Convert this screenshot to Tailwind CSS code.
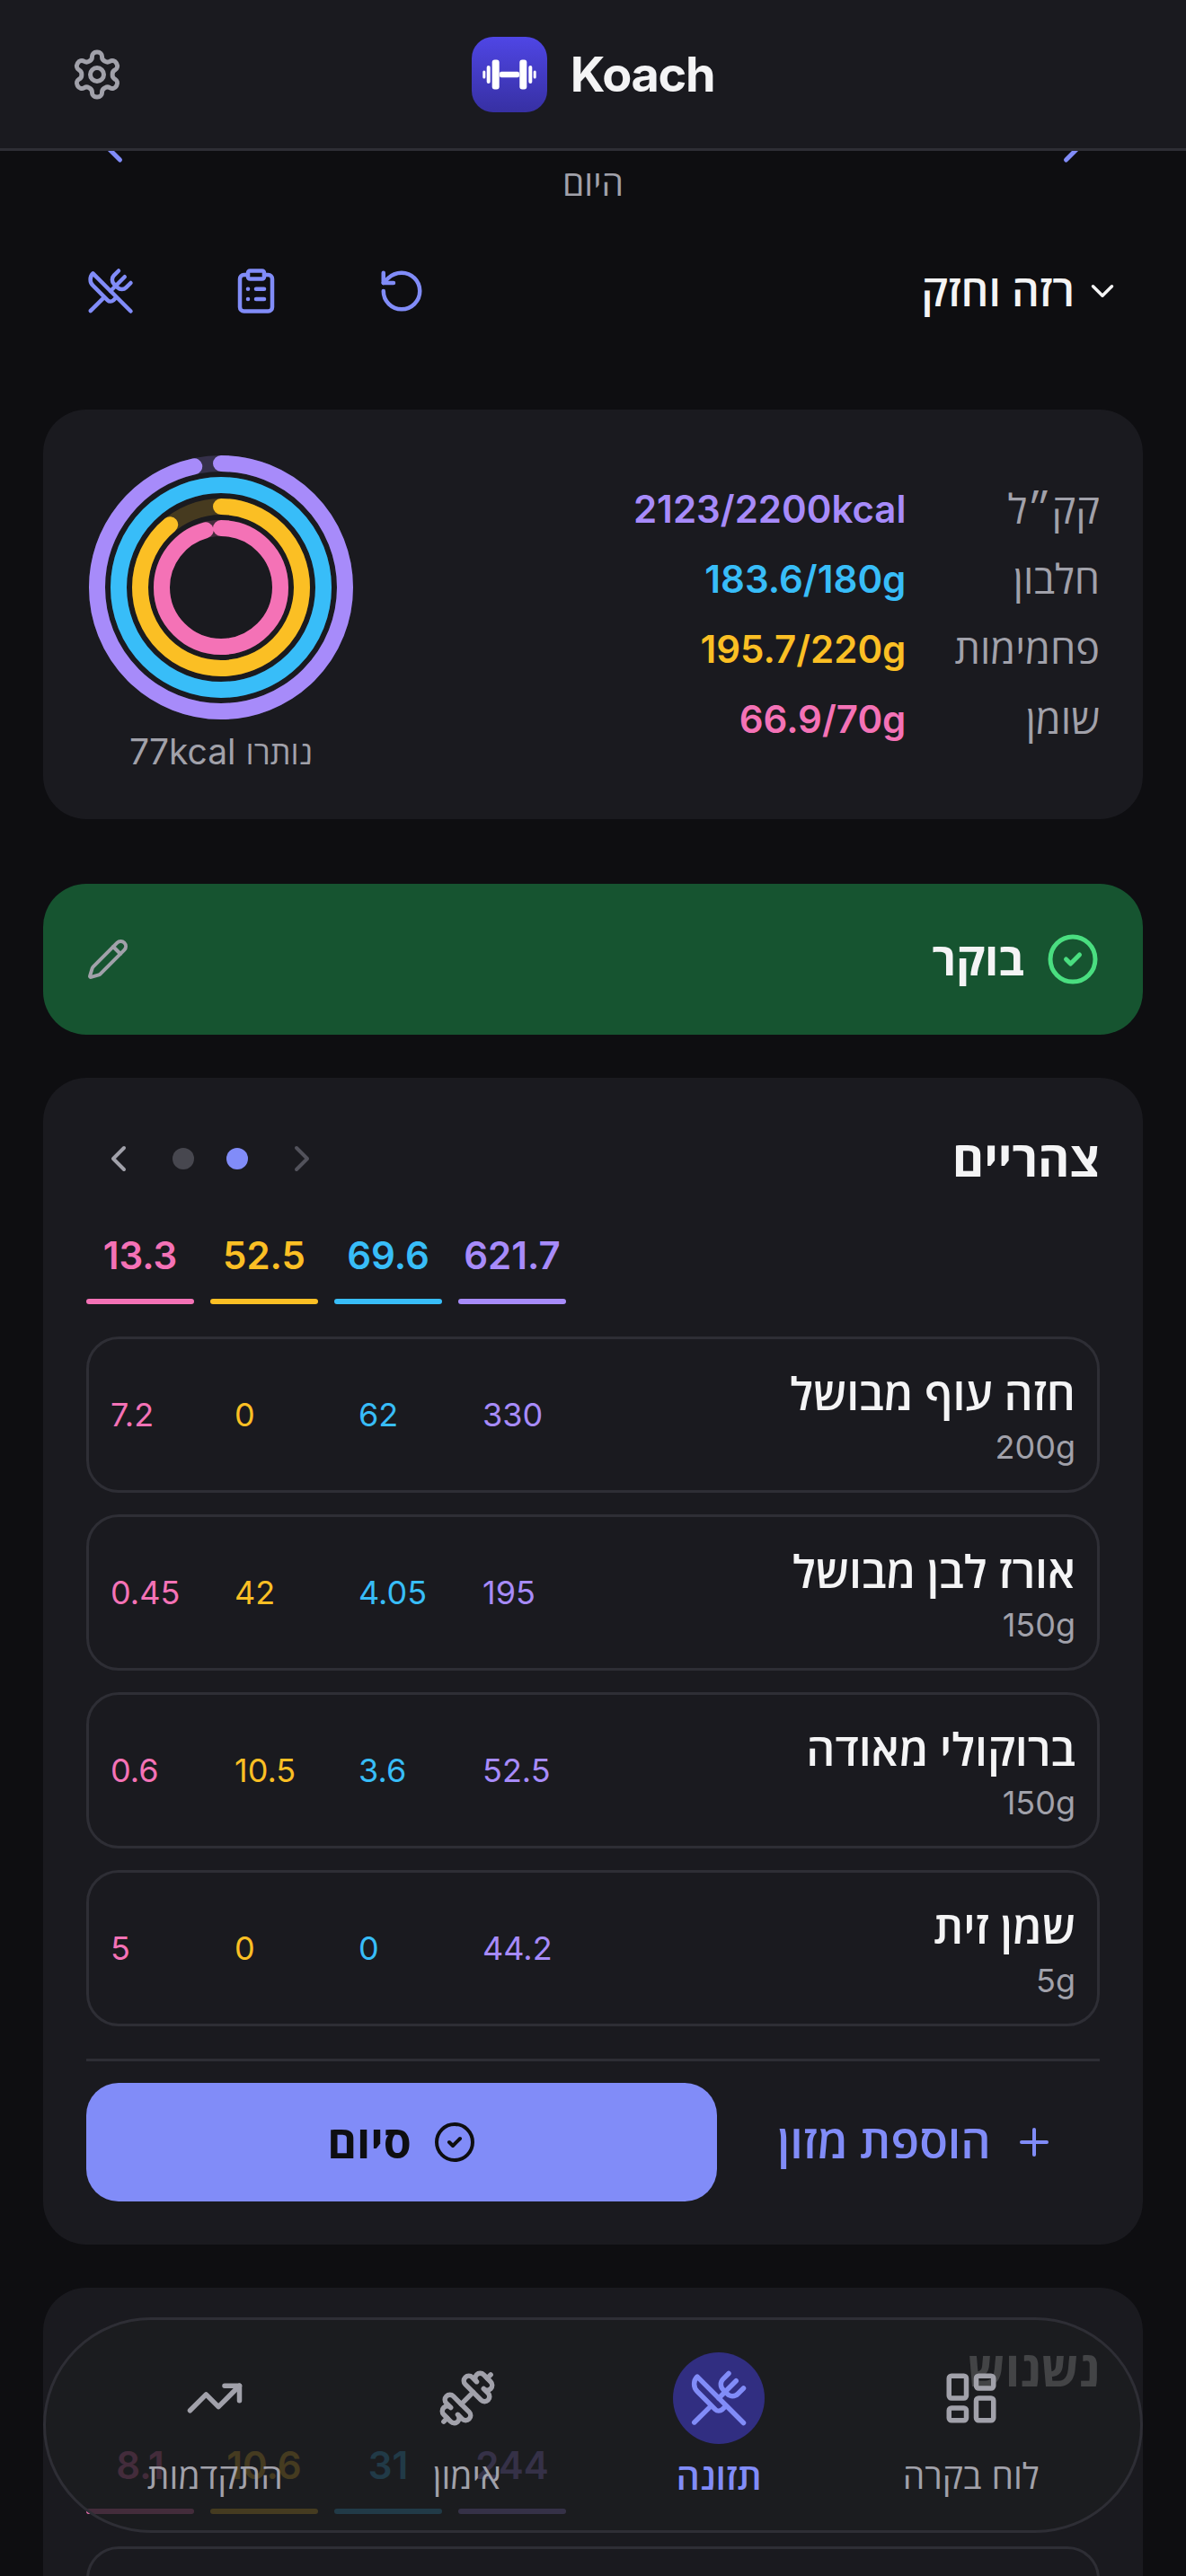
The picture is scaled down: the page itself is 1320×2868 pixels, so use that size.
<!DOCTYPE html>
<html lang="he" dir="rtl">
<head>
<meta charset="UTF-8">
<meta name="viewport" content="width=device-width, initial-scale=1.0">
<title>Koach</title>
<script src="https://cdn.jsdelivr.net/npm/@tailwindcss/browser@4"></script>
</head>
<body class="bg-[#0e0e11] text-[#f4f4f5] font-[Inter,'Open_Sans',sans-serif]">
<div class="relative h-[2868px] w-[1320px] overflow-hidden">

  <!-- Top bar -->
  <header class="absolute top-0 inset-x-0 z-10 h-[168px] bg-[#1a1a1f] border-b-[3px] border-[#2e2e35] grid grid-cols-3 items-center px-[78px]" dir="ltr">
    <svg class="text-[#a1a1aa]" width="60" height="60" viewBox="0 0 24 24" fill="none" stroke="currentColor" stroke-width="2" stroke-linecap="round" stroke-linejoin="round"><path d="M12.22 2h-.44a2 2 0 0 0-2 2v.18a2 2 0 0 1-1 1.73l-.43.25a2 2 0 0 1-2 0l-.15-.08a2 2 0 0 0-2.73.73l-.22.38a2 2 0 0 0 .73 2.73l.15.1a2 2 0 0 1 1 1.72v.51a2 2 0 0 1-1 1.74l-.15.09a2 2 0 0 0-.73 2.73l.22.38a2 2 0 0 0 2.73.73l.15-.08a2 2 0 0 1 2 0l.43.25a2 2 0 0 1 1 1.73V20a2 2 0 0 0 2 2h.44a2 2 0 0 0 2-2v-.18a2 2 0 0 1 1-1.73l.43-.25a2 2 0 0 1 2 0l.15.08a2 2 0 0 0 2.73-.73l.22-.39a2 2 0 0 0-.73-2.73l-.15-.08a2 2 0 0 1-1-1.74v-.5a2 2 0 0 1 1-1.74l.15-.09a2 2 0 0 0 .73-2.73l-.22-.38a2 2 0 0 0-2.73-.73l-.15.08a2 2 0 0 1-2 0l-.43-.25a2 2 0 0 1-1-1.73V4a2 2 0 0 0-2-2z"/><circle cx="12" cy="12" r="3"/></svg>
    <div class="flex items-center justify-center gap-[26px] whitespace-nowrap">
      <div class="w-[84px] h-[84px] rounded-[24px] bg-gradient-to-b from-[#4f46e5] to-[#3730a3] flex items-center justify-center shrink-0">
        <svg width="84" height="84" viewBox="0 0 84 84" fill="#ffffff">
          <rect x="12.3" y="37.5" width="3" height="9" rx="1.5"/>
          <rect x="16.7" y="32" width="4" height="20" rx="2"/>
          <rect x="22.7" y="25.5" width="8" height="33" rx="3"/>
          <rect x="31" y="38.7" width="22" height="6.6" rx="2"/>
          <rect x="53.3" y="25.5" width="8" height="33" rx="3"/>
          <rect x="63.3" y="32" width="4" height="20" rx="2"/>
          <rect x="68.7" y="37.5" width="3" height="9" rx="1.5"/>
        </svg>
      </div>
      <span class="text-[54px] leading-[84px] font-bold tracking-tight">Koach</span>
    </div>
    <div></div>
  </header>

  <main class="pt-[133px] px-[48px]">
    <!-- Date row, mostly under the top bar -->
    <div class="flex justify-between items-start text-[#818cf8]">
      <svg width="60" height="60" viewBox="0 0 24 24" fill="none" stroke="currentColor" stroke-width="2" stroke-linecap="round" stroke-linejoin="round" class="mr-[48px]"><path d="m9 18 6-6-6-6"/></svg>
      <span class="mt-[44px] text-[39px] leading-[54px] text-[#a1a1aa]">היום</span>
      <svg width="60" height="60" viewBox="0 0 24 24" fill="none" stroke="currentColor" stroke-width="2" stroke-linecap="round" stroke-linejoin="round" class="ml-[48px]"><path d="m15 18-6-6 6-6"/></svg>
    </div>

    <!-- Plan picker and actions -->
    <div class="mt-[63px] flex justify-between items-center h-[60px] pr-[24px] pl-[48px]">
      <div class="flex items-center gap-[10px] text-[48px] font-semibold">
        <svg width="42" height="42" viewBox="0 0 24 24" fill="none" stroke="currentColor" stroke-width="2" stroke-linecap="round" stroke-linejoin="round"><path d="m6 9 6 6 6-6"/></svg>
        <span>רזה וחזק</span>
      </div>
      <div class="flex flex-row-reverse gap-[108px] text-[#818cf8]">
        <svg width="54" height="54" viewBox="0 0 24 24" fill="none" stroke="currentColor" stroke-width="2" stroke-linecap="round" stroke-linejoin="round"><path d="m16 2-2.3 2.3a3 3 0 0 0 0 4.2l1.8 1.8a3 3 0 0 0 4.2 0L22 8"/><path d="M15 15 3.3 3.3a4.2 4.2 0 0 0 0 6l7.3 7.3c.7.7 2 .7 2.8 0L15 15Zm0 0 7 7"/><path d="m2.1 21.8 6.4-6.3"/><path d="m19 5-7 7"/></svg>
        <svg width="54" height="54" viewBox="0 0 24 24" fill="none" stroke="currentColor" stroke-width="2" stroke-linecap="round" stroke-linejoin="round"><rect width="8" height="4" x="8" y="2" rx="1" ry="1"/><path d="M16 4h2a2 2 0 0 1 2 2v14a2 2 0 0 1-2 2H6a2 2 0 0 1-2-2V6a2 2 0 0 1 2-2h2"/><path d="M12 11h4"/><path d="M12 16h4"/><path d="M8 11h.01"/><path d="M8 16h.01"/></svg>
        <svg width="54" height="54" viewBox="0 0 24 24" fill="none" stroke="currentColor" stroke-width="2" stroke-linecap="round" stroke-linejoin="round"><path d="M3 12a9 9 0 1 0 9-9 9.75 9.75 0 0 0-6.74 2.74L3 8"/><path d="M3 3v5h5"/></svg>
      </div>
    </div>

    <!-- Daily totals -->
    <section class="mt-[102px] h-[456px] rounded-[48px] bg-[#1a1a1f] p-[48px] flex justify-between items-center">
      <div class="grid grid-cols-[auto_auto] gap-x-[54px] gap-y-[18px] text-[42px] leading-[60px]">
        <span class="text-[45px] text-[#a1a1aa]">קק״ל</span><span dir="ltr" class="text-right font-semibold text-[#a78bfa]">2123/2200kcal</span>
        <span class="text-[45px] text-[#a1a1aa]">חלבון</span><span dir="ltr" class="text-right font-semibold text-[#38bdf8]">183.6/180g</span>
        <span class="text-[45px] text-[#a1a1aa]">פחמימות</span><span dir="ltr" class="text-right font-semibold text-[#fbbf24]">195.7/220g</span>
        <span class="text-[45px] text-[#a1a1aa]">שומן</span><span dir="ltr" class="text-right font-semibold text-[#f472b6]">66.9/70g</span>
      </div>
      <div class="flex flex-col items-center w-[300px]">
        <svg width="300" height="300" viewBox="0 0 300 300" fill="none" stroke-width="18" stroke-linecap="round">
          <g transform="rotate(-90 150 150)">
            <circle cx="150" cy="150" r="138" stroke="#a78bfa" stroke-opacity="0.2" stroke-linecap="butt"/>
            <circle cx="150" cy="150" r="138" stroke="#a78bfa" stroke-dasharray="836.7 867.1"/>
            <circle cx="150" cy="150" r="114" stroke="#38bdf8" stroke-opacity="0.2" stroke-linecap="butt"/>
            <circle cx="150" cy="150" r="114" stroke="#38bdf8"/>
            <circle cx="150" cy="150" r="90" stroke="#fbbf24" stroke-opacity="0.2" stroke-linecap="butt"/>
            <circle cx="150" cy="150" r="90" stroke="#fbbf24" stroke-dasharray="503.2 565.5"/>
            <circle cx="150" cy="150" r="66" stroke="#f472b6" stroke-opacity="0.2" stroke-linecap="butt"/>
            <circle cx="150" cy="150" r="66" stroke="#f472b6" stroke-dasharray="396.4 414.7"/>
          </g>
        </svg>
        <span class="mt-[6px] text-[39px] leading-[54px] text-[#a1a1aa] whitespace-nowrap"><span class="text-[36px]">נותרו</span> 77kcal</span>
      </div>
    </section>

    <!-- Finished meal -->
    <section class="mt-[72px] h-[168px] rounded-[48px] bg-[#165430] px-[48px] flex justify-between items-center">
      <div class="flex items-center gap-[24px]">
        <svg class="text-[#4ade80]" width="60" height="60" viewBox="0 0 24 24" fill="none" stroke="currentColor" stroke-width="2" stroke-linecap="round" stroke-linejoin="round"><circle cx="12" cy="12" r="10"/><path d="m9 12 2 2 4-4"/></svg>
        <span class="text-[50px] font-bold">בוקר</span>
      </div>
      <svg class="text-[#a1a1aa]" width="48" height="48" viewBox="0 0 24 24" fill="none" stroke="currentColor" stroke-width="2" stroke-linecap="round" stroke-linejoin="round"><path d="M21.174 6.812a1 1 0 0 0-3.986-3.987L3.842 16.174a2 2 0 0 0-.5.83l-1.321 4.352a.5.5 0 0 0 .623.622l4.353-1.32a2 2 0 0 0 .83-.497z"/><path d="m15 5 4 4"/></svg>
    </section>

    <!-- Lunch -->
    <section class="mt-[48px] rounded-[48px] bg-[#1a1a1f] p-[48px]">
      <div class="flex justify-between items-center h-[84px]">
        <h2 class="text-[54px] font-bold">צהריים</h2>
        <div class="flex items-center gap-[36px] pl-[12px]" dir="ltr">
          <svg class="text-[#a1a1aa]" width="48" height="48" viewBox="0 0 24 24" fill="none" stroke="currentColor" stroke-width="2" stroke-linecap="round" stroke-linejoin="round"><path d="m15 18-6-6 6-6"/></svg>
          <span class="w-[24px] h-[24px] rounded-full bg-[#47474f]"></span>
          <span class="w-[24px] h-[24px] rounded-full bg-[#818cf8]"></span>
          <svg class="text-[#52525b]" width="48" height="48" viewBox="0 0 24 24" fill="none" stroke="currentColor" stroke-width="2" stroke-linecap="round" stroke-linejoin="round"><path d="m9 18 6-6-6-6"/></svg>
        </div>
      </div>

      <div class="mt-[36px] flex gap-[18px] text-[42px] leading-[60px] font-semibold text-center" dir="ltr">
        <div class="w-[120px] text-[#f472b6]">13.3<div class="mt-[18px] h-[6px] rounded-full bg-[#f472b6]"></div></div>
        <div class="w-[120px] text-[#fbbf24]">52.5<div class="mt-[18px] h-[6px] rounded-full bg-[#fbbf24]"></div></div>
        <div class="w-[120px] text-[#38bdf8]">69.6<div class="mt-[18px] h-[6px] rounded-full bg-[#38bdf8]"></div></div>
        <div class="w-[120px] text-[#a78bfa]">621.7<div class="mt-[18px] h-[6px] rounded-full bg-[#a78bfa]"></div></div>
      </div>

      <div class="mt-[36px] flex flex-col gap-[24px]">
        <div class="h-[174px] rounded-[36px] border-[3px] border-[#2e2e35] px-[24px] flex justify-between items-center">
          <div><div class="pt-[8px] text-[50px] leading-[64px] font-semibold">חזה עוף מבושל</div><div class="text-[36px] leading-[54px] text-[#a1a1aa]">200g</div></div>
          <div class="grid grid-cols-[repeat(4,138px)] text-[36px]" dir="ltr"><span class="text-[#f472b6]">7.2</span><span class="text-[#fbbf24]">0</span><span class="text-[#38bdf8]">62</span><span class="text-[#a78bfa]">330</span></div>
        </div>
        <div class="h-[174px] rounded-[36px] border-[3px] border-[#2e2e35] px-[24px] flex justify-between items-center">
          <div><div class="pt-[8px] text-[50px] leading-[64px] font-semibold">אורז לבן מבושל</div><div class="text-[36px] leading-[54px] text-[#a1a1aa]">150g</div></div>
          <div class="grid grid-cols-[repeat(4,138px)] text-[36px]" dir="ltr"><span class="text-[#f472b6]">0.45</span><span class="text-[#fbbf24]">42</span><span class="text-[#38bdf8]">4.05</span><span class="text-[#a78bfa]">195</span></div>
        </div>
        <div class="h-[174px] rounded-[36px] border-[3px] border-[#2e2e35] px-[24px] flex justify-between items-center">
          <div><div class="pt-[8px] text-[50px] leading-[64px] font-semibold">ברוקולי מאודה</div><div class="text-[36px] leading-[54px] text-[#a1a1aa]">150g</div></div>
          <div class="grid grid-cols-[repeat(4,138px)] text-[36px]" dir="ltr"><span class="text-[#f472b6]">0.6</span><span class="text-[#fbbf24]">10.5</span><span class="text-[#38bdf8]">3.6</span><span class="text-[#a78bfa]">52.5</span></div>
        </div>
        <div class="h-[174px] rounded-[36px] border-[3px] border-[#2e2e35] px-[24px] flex justify-between items-center">
          <div><div class="pt-[8px] text-[50px] leading-[64px] font-semibold">שמן זית</div><div class="text-[36px] leading-[54px] text-[#a1a1aa]">5g</div></div>
          <div class="grid grid-cols-[repeat(4,138px)] text-[36px]" dir="ltr"><span class="text-[#f472b6]">5</span><span class="text-[#fbbf24]">0</span><span class="text-[#38bdf8]">0</span><span class="text-[#a78bfa]">44.2</span></div>
        </div>
      </div>

      <div class="mt-[36px] pt-[24px] border-t-[3px] border-[#2e2e35] flex gap-[18px] h-[159px]">
        <button class="flex-1 flex items-center justify-center gap-[24px] text-[#818cf8] text-[52px] font-semibold">
          <svg width="48" height="48" viewBox="0 0 24 24" fill="none" stroke="currentColor" stroke-width="2" stroke-linecap="round" stroke-linejoin="round"><path d="M5 12h14"/><path d="M12 5v14"/></svg>
          <span>הוספת מזון</span>
        </button>
        <button class="w-[702px] rounded-[36px] bg-[#818cf8] text-[#0e0e11] flex items-center justify-center gap-[24px] text-[50px] font-bold">
          <svg width="48" height="48" viewBox="0 0 24 24" fill="none" stroke="currentColor" stroke-width="2" stroke-linecap="round" stroke-linejoin="round"><circle cx="12" cy="12" r="10"/><path d="m9 12 2 2 4-4"/></svg>
          <span>סיום</span>
        </button>
      </div>
    </section>

    <!-- Snack, under the tab bar -->
    <section class="mt-[48px] rounded-[48px] bg-[#1a1a1f] p-[48px]">
      <div class="flex items-center h-[84px]"><h2 class="text-[54px] font-bold">נשנוש</h2></div>
      <div class="mt-[36px] flex gap-[18px] text-[42px] leading-[60px] font-semibold text-center" dir="ltr">
        <div class="w-[120px] text-[#f472b6]">8.1<div class="mt-[18px] h-[6px] rounded-full bg-[#f472b6]"></div></div>
        <div class="w-[120px] text-[#fbbf24]">10.6<div class="mt-[18px] h-[6px] rounded-full bg-[#fbbf24]"></div></div>
        <div class="w-[120px] text-[#38bdf8]">31<div class="mt-[18px] h-[6px] rounded-full bg-[#38bdf8]"></div></div>
        <div class="w-[120px] text-[#a78bfa]">244<div class="mt-[18px] h-[6px] rounded-full bg-[#a78bfa]"></div></div>
      </div>
      <div class="mt-[36px] h-[174px] rounded-[36px] border-[3px] border-[#2e2e35]"></div>
    </section>
  </main>

  <!-- Tab bar -->
  <nav class="absolute bottom-[48px] inset-x-[48px] z-10 h-[240px] rounded-full border-[3px] border-[#2e2e35] bg-[#1c1d20]/[.82] px-[48px] pt-[36px] grid grid-cols-4 text-[39px] leading-[54px] text-[#a1a1aa]">
    <div class="flex flex-col items-center">
      <span class="w-[102px] h-[102px] flex items-center justify-center"><svg width="66" height="66" viewBox="0 0 24 24" fill="none" stroke="currentColor" stroke-width="2" stroke-linecap="round" stroke-linejoin="round"><rect width="7" height="9" x="3" y="3" rx="1"/><rect width="7" height="5" x="14" y="3" rx="1"/><rect width="7" height="9" x="14" y="12" rx="1"/><rect width="7" height="5" x="3" y="16" rx="1"/></svg></span>
      <span class="mt-[9px]">לוח בקרה</span>
    </div>
    <div class="flex flex-col items-center text-[#818cf8]">
      <span class="w-[102px] h-[102px] rounded-full bg-[#312e81] flex items-center justify-center"><svg width="66" height="66" viewBox="0 0 24 24" fill="none" stroke="currentColor" stroke-width="2" stroke-linecap="round" stroke-linejoin="round"><path d="m16 2-2.3 2.3a3 3 0 0 0 0 4.2l1.8 1.8a3 3 0 0 0 4.2 0L22 8"/><path d="M15 15 3.3 3.3a4.2 4.2 0 0 0 0 6l7.3 7.3c.7.7 2 .7 2.8 0L15 15Zm0 0 7 7"/><path d="m2.1 21.8 6.4-6.3"/><path d="m19 5-7 7"/></svg></span>
      <span class="mt-[9px] text-[41px] font-semibold">תזונה</span>
    </div>
    <div class="flex flex-col items-center">
      <span class="w-[102px] h-[102px] flex items-center justify-center"><svg width="66" height="66" viewBox="0 0 24 24" fill="none" stroke="currentColor" stroke-width="2" stroke-linecap="round" stroke-linejoin="round"><path d="M17.596 12.768a2 2 0 1 0 2.829-2.829l-1.768-1.767a2 2 0 0 0 2.828-2.829l-2.828-2.828a2 2 0 0 0-2.828 2.829l-1.767-1.768a2 2 0 1 0-2.829 2.829z"/><path d="m2.5 21.5 1.4-1.4"/><path d="m20.1 3.9 1.4-1.4"/><path d="M5.343 21.485a2 2 0 1 0 2.829-2.828l1.767 1.768a2 2 0 1 0 2.829-2.829l-6.364-6.364a2 2 0 1 0-2.829 2.829l1.768 1.767a2 2 0 0 0-2.828 2.829z"/><path d="m9.6 14.4 4.8-4.8"/></svg></span>
      <span class="mt-[9px]">אימון</span>
    </div>
    <div class="flex flex-col items-center">
      <span class="w-[102px] h-[102px] flex items-center justify-center"><svg width="66" height="66" viewBox="0 0 24 24" fill="none" stroke="currentColor" stroke-width="2" stroke-linecap="round" stroke-linejoin="round"><path d="M16 7h6v6"/><path d="m22 7-8.5 8.5-5-5L2 17"/></svg></span>
      <span class="mt-[9px]">התקדמות</span>
    </div>
  </nav>
</div>
</body>
</html>
